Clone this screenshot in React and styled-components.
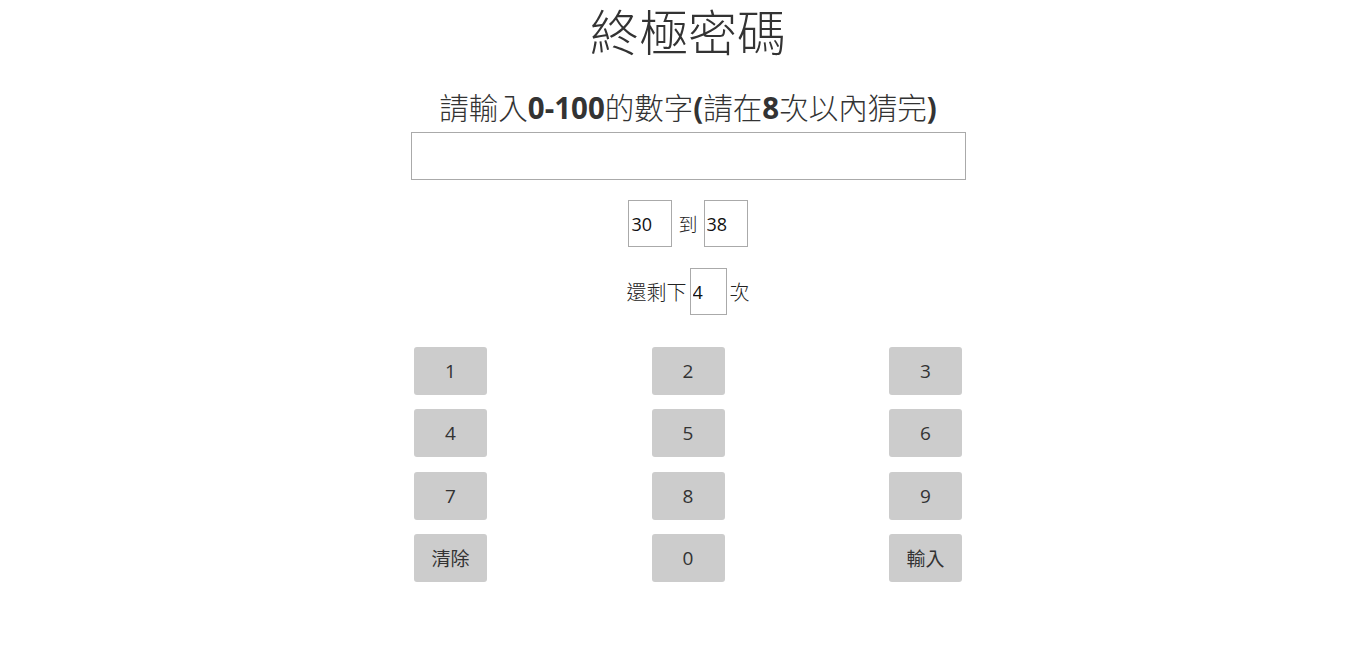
import React from 'react';
import styled, { createGlobalStyle } from 'styled-components';

const Global = createGlobalStyle`
  body {
    margin: 0;
    background: #fff;
    font-family: "Open Sans", "Noto Sans CJK TC", sans-serif;
    color: #222;
  }
`;

const Page = styled.div`
  display: flex;
  flex-direction: column;
  align-items: center;
  padding-left: 7px;
`;

const Title = styled.h1`
  margin: 0;
  line-height: 60px;
  font-family: "Noto Sans CJK TC", sans-serif;
  font-weight: 300;
  font-size: 49px;
  color: #333;
`;

const Prompt = styled.h3`
  margin: 26px 0 0;
  line-height: 40px;
  font-family: "Noto Sans CJK TC", sans-serif;
  font-weight: 300;
  font-size: 29.5px;
  color: #333;
`;

const Latin = styled.span`
  font-family: "Open Sans", sans-serif;
  font-weight: 700;
`;

const GuessBox = styled.input`
  box-sizing: border-box;
  margin-top: 4px;
  width: 555px;
  height: 48px;
  border: 1px solid #aaa;
  outline: none;
  font-size: 20px;
`;

const Line = styled.div`
  display: flex;
  align-items: center;
  gap: ${p => p.$gap}px;
  margin-top: ${p => p.$top}px;
  font-family: "Noto Sans CJK TC", sans-serif;
  font-weight: 300;
  font-size: ${p => p.$size}px;
  color: #222;
`;

const Cell = styled.input`
  box-sizing: border-box;
  width: ${p => p.$w}px;
  height: 47px;
  padding: 0 2px;
  border: 1px solid #aaa;
  outline: none;
  font-family: "Open Sans", sans-serif;
  font-size: 18px;
  color: #111;
`;

const Pad = styled.div`
  margin-top: 32px;
  width: 548px;
  display: grid;
  grid-template-columns: 73px 73px 73px;
  justify-content: space-between;
  row-gap: 14.3px;
`;

const Key = styled.button`
  height: 48px;
  border: none;
  border-radius: 3px;
  background: #ccc;
  color: #333;
  font-family: "Open Sans", "Noto Sans CJK TC", sans-serif;
  font-size: 19px;
  padding: 0;
  cursor: pointer;
`;

const keys = ['1', '2', '3', '4', '5', '6', '7', '8', '9', '清除', '0', '輸入'];

export default function App() {
  return (
    <>
      <Global />
      <Page>
        <Title>終極密碼</Title>
        <Prompt>
          請輸入<Latin>0-100</Latin>的數字<Latin>(</Latin>請在<Latin>8</Latin>次以內猜完<Latin>)</Latin>
        </Prompt>
        <GuessBox type="text" />
        <Line $top={20} $gap={6} $size={19}>
          <Cell $w={44} defaultValue="30" readOnly />
          到
          <Cell $w={44} defaultValue="38" readOnly />
        </Line>
        <Line $top={21} $gap={3} $size={20}>
          還剩下
          <Cell $w={37} defaultValue="4" readOnly />
          次
        </Line>
        <Pad>
          {keys.map(k => (
            <Key key={k}>{k}</Key>
          ))}
        </Pad>
      </Page>
    </>
  );
}
